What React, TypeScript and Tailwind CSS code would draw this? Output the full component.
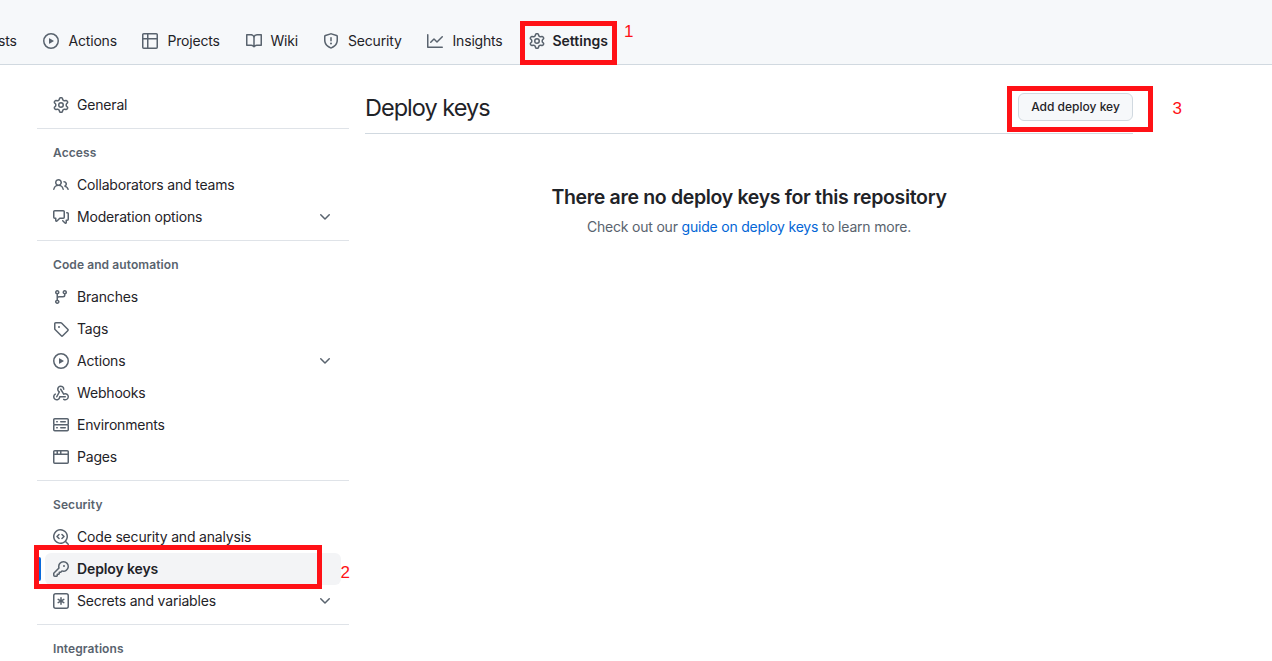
import type { ReactNode } from "react";

const icons = {
  gear: "M8 0a8.2 8.2 0 0 1 .701.031C9.444.095 9.99.645 10.16 1.29l.288 1.107c.018.066.079.158.212.224.231.114.454.243.668.386.123.082.233.09.299.071l1.103-.303c.644-.176 1.392.021 1.82.63.27.385.506.792.704 1.218.315.675.111 1.422-.364 1.891l-.814.806c-.049.048-.098.147-.088.294.016.257.016.515 0 .772-.01.147.038.246.088.294l.814.806c.475.469.679 1.216.364 1.891a7.977 7.977 0 0 1-.704 1.217c-.428.61-1.176.807-1.82.63l-1.102-.302c-.067-.019-.177-.011-.3.071a5.909 5.909 0 0 1-.668.386c-.133.066-.194.158-.211.224l-.29 1.106c-.168.646-.715 1.196-1.458 1.26a8.006 8.006 0 0 1-1.402 0c-.743-.064-1.289-.614-1.458-1.26l-.289-1.106c-.018-.066-.079-.158-.212-.224a5.738 5.738 0 0 1-.668-.386c-.123-.082-.233-.09-.299-.071l-1.103.303c-.644.176-1.392-.021-1.82-.63a8.12 8.12 0 0 1-.704-1.218c-.315-.675-.111-1.422.363-1.891l.815-.806c.05-.048.098-.147.088-.294a6.214 6.214 0 0 1 0-.772c.01-.147-.038-.246-.088-.294l-.815-.806C.635 6.045.431 5.298.746 4.623a7.92 7.92 0 0 1 .704-1.217c.428-.61 1.176-.807 1.82-.63l1.102.302c.067.019.177.011.3-.071.214-.143.437-.272.668-.386.133-.066.194-.158.211-.224l.29-1.106C6.009.645 6.556.095 7.299.03 7.53.01 7.764 0 8 0Zm-.571 1.525c-.036.003-.108.036-.137.146l-.289 1.105c-.147.561-.549.967-.998 1.189-.173.086-.34.183-.5.29-.417.278-.97.423-1.529.27l-1.103-.303c-.109-.03-.175.016-.195.045-.22.312-.412.644-.573.99-.014.031-.021.11.059.19l.815.806c.411.406.562.957.53 1.456a4.709 4.709 0 0 0 0 .582c.032.499-.119 1.05-.53 1.456l-.815.806c-.081.08-.073.159-.059.19.162.346.353.677.573.989.02.03.085.076.195.046l1.102-.303c.56-.153 1.113-.008 1.53.27.161.107.328.204.501.29.447.222.85.629.997 1.189l.289 1.105c.029.109.101.143.137.146a6.6 6.6 0 0 0 1.142 0c.036-.003.108-.036.137-.146l.289-1.105c.147-.561.549-.967.998-1.189.173-.086.34-.183.5-.29.417-.278.97-.423 1.529-.27l1.103.303c.109.029.175-.016.195-.045.22-.313.411-.644.573-.99.014-.031.021-.11-.059-.19l-.815-.806c-.411-.406-.562-.957-.53-1.456a4.709 4.709 0 0 0 0-.582c-.032-.499.119-1.05.53-1.456l.815-.806c.081-.08.073-.159.059-.19a6.464 6.464 0 0 0-.573-.989c-.02-.03-.085-.076-.195-.046l-1.102.303c-.56.153-1.113.008-1.53-.27a4.44 4.44 0 0 0-.501-.29c-.447-.222-.85-.629-.997-1.189l-.289-1.105c-.029-.11-.101-.143-.137-.146a6.6 6.6 0 0 0-1.142 0ZM11 8a3 3 0 1 1-6 0 3 3 0 0 1 6 0ZM9.5 8a1.5 1.5 0 1 0-3.001.001A1.5 1.5 0 0 0 9.5 8Z",
  play: "M8 0a8 8 0 1 1 0 16A8 8 0 0 1 8 0ZM1.5 8a6.5 6.5 0 1 0 13 0 6.5 6.5 0 0 0-13 0Zm4.879-2.773 4.264 2.559a.25.25 0 0 1 0 .428l-4.264 2.559A.25.25 0 0 1 6 10.559V5.442a.25.25 0 0 1 .379-.215Z",
  table: "M0 1.75C0 .784.784 0 1.75 0h12.5C15.216 0 16 .784 16 1.75v12.5A1.75 1.75 0 0 1 14.25 16H1.75A1.75 1.75 0 0 1 0 14.25ZM6.5 6.5v8h7.75a.25.25 0 0 0 .25-.25V6.5Zm8-1.5V1.75a.25.25 0 0 0-.25-.25H6.5V5Zm-13 1.5v7.75c0 .138.112.25.25.25H5v-8ZM5 5V1.5H1.75a.25.25 0 0 0-.25.25V5Z",
  book: "M0 1.75A.75.75 0 0 1 .75 1h4.253c1.227 0 2.317.59 3 1.501A3.743 3.743 0 0 1 11.006 1h4.245a.75.75 0 0 1 .75.75v10.5a.75.75 0 0 1-.75.75h-4.507a2.25 2.25 0 0 0-1.591.659l-.622.621a.75.75 0 0 1-1.06 0l-.622-.621A2.25 2.25 0 0 0 5.258 13H.75a.75.75 0 0 1-.75-.75Zm7.251 10.324.004-5.073-.002-2.253A2.25 2.25 0 0 0 5.003 2.5H1.5v9h3.757a3.75 3.75 0 0 1 1.994.574ZM8.755 4.75l-.004 7.322a3.752 3.752 0 0 1 1.992-.572H14.5v-9h-3.495a2.25 2.25 0 0 0-2.25 2.25Z",
  shield: "M7.467.133a1.748 1.748 0 0 1 1.066 0l5.25 1.68A1.75 1.75 0 0 1 15 3.48V7c0 1.566-.32 3.182-1.303 4.682-.983 1.498-2.585 2.813-5.032 3.855a1.697 1.697 0 0 1-1.33 0c-2.447-1.042-4.049-2.357-5.032-3.855C1.32 10.182 1 8.566 1 7V3.48a1.75 1.75 0 0 1 1.217-1.667Zm.61 1.429a.25.25 0 0 0-.153 0l-5.25 1.68a.25.25 0 0 0-.174.238V7c0 1.358.275 2.666 1.057 3.86.784 1.194 2.121 2.34 4.366 3.297a.196.196 0 0 0 .154 0c2.245-.956 3.582-2.104 4.366-3.298C13.225 9.666 13.5 8.36 13.5 7V3.48a.251.251 0 0 0-.174-.237l-5.25-1.68ZM8.75 4.75v3a.75.75 0 0 1-1.5 0v-3a.75.75 0 0 1 1.5 0ZM9 10.5a1 1 0 1 1-2 0 1 1 0 0 1 2 0Z",
  graph: "M1.5 1.75V13.5h13.75a.75.75 0 0 1 0 1.5H.75a.75.75 0 0 1-.75-.75V1.75a.75.75 0 0 1 1.5 0Zm14.28 2.53-5.25 5.25a.75.75 0 0 1-1.06 0L7 7.06 4.28 9.78a.751.751 0 0 1-1.042-.018.751.751 0 0 1-.018-1.042l3.25-3.25a.75.75 0 0 1 1.06 0L10 7.94l4.72-4.72a.751.751 0 0 1 1.042.018.751.751 0 0 1 .018 1.042Z",
  people: "M2 5.5a3.5 3.5 0 1 1 5.898 2.549 5.508 5.508 0 0 1 3.034 4.084.75.75 0 1 1-1.482.235 4 4 0 0 0-7.9 0 .75.75 0 0 1-1.482-.236A5.507 5.507 0 0 1 3.102 8.05 3.493 3.493 0 0 1 2 5.5ZM11 4a3.001 3.001 0 0 1 2.22 5.018 5.01 5.01 0 0 1 2.56 3.012.749.749 0 0 1-.885.954.752.752 0 0 1-.549-.514 3.507 3.507 0 0 0-2.522-2.372.75.75 0 0 1-.574-.73v-.352a.75.75 0 0 1 .416-.672A1.5 1.5 0 0 0 11 5.5.75.75 0 0 1 11 4Zm-5.5-.5a2 2 0 1 0-.001 3.999A2 2 0 0 0 5.5 3.5Z",
  discussion: "M1.75 1h8.5c.966 0 1.75.784 1.75 1.75v5.5A1.75 1.75 0 0 1 10.25 10H7.061l-2.574 2.573A1.458 1.458 0 0 1 2 11.543V10h-.25A1.75 1.75 0 0 1 0 8.25v-5.5C0 1.784.784 1 1.75 1ZM1.5 2.75v5.5c0 .138.112.25.25.25h1a.75.75 0 0 1 .75.75v2.19l2.72-2.72a.749.749 0 0 1 .53-.22h3.5a.25.25 0 0 0 .25-.25v-5.5a.25.25 0 0 0-.25-.25h-8.5a.25.25 0 0 0-.25.25Zm13 2a.25.25 0 0 0-.25-.25h-.5a.75.75 0 0 1 0-1.5h.5c.966 0 1.75.784 1.75 1.75v5.5A1.75 1.75 0 0 1 14.25 12H14v1.543a1.458 1.458 0 0 1-2.487 1.03L9.22 12.28a.749.749 0 0 1 .326-1.275.749.749 0 0 1 .734.215l2.22 2.22v-2.19a.75.75 0 0 1 .75-.75h1a.25.25 0 0 0 .25-.25Z",
  chevron: "M12.78 5.22a.749.749 0 0 1 0 1.06l-4.25 4.25a.749.749 0 0 1-1.06 0L3.22 6.28a.749.749 0 1 1 1.06-1.06L8 8.939l3.72-3.719a.749.749 0 0 1 1.06 0Z",
  branch: "M9.5 3.25a2.25 2.25 0 1 1 3 2.122V6A2.5 2.5 0 0 1 10 8.5H6a1 1 0 0 0-1 1v1.128a2.251 2.251 0 1 1-1.5 0V5.372a2.25 2.25 0 1 1 1.5 0v1.836A2.493 2.493 0 0 1 6 7h4a1 1 0 0 0 1-1v-.628A2.25 2.25 0 0 1 9.5 3.25Zm-6 0a.75.75 0 1 0 1.5 0 .75.75 0 0 0-1.5 0Zm8.25-.75a.75.75 0 1 0 0 1.5.75.75 0 0 0 0-1.5ZM4.25 12a.75.75 0 1 0 0 1.5.75.75 0 0 0 0-1.5Z",
  tag: "M1 7.775V2.75C1 1.784 1.784 1 2.75 1h5.025c.464 0 .91.184 1.238.513l6.25 6.25a1.75 1.75 0 0 1 0 2.474l-5.026 5.026a1.75 1.75 0 0 1-2.474 0l-6.25-6.25A1.752 1.752 0 0 1 1 7.775Zm1.5 0c0 .066.026.13.073.177l6.25 6.25a.25.25 0 0 0 .354 0l5.025-5.025a.25.25 0 0 0 0-.354l-6.25-6.25a.25.25 0 0 0-.177-.073H2.75a.25.25 0 0 0-.25.25ZM6 5a1 1 0 1 1 0 2 1 1 0 0 1 0-2Z",
  webhook: "M5.5 4.25a2.25 2.25 0 0 1 4.5 0 .75.75 0 0 0 1.5 0 3.75 3.75 0 1 0-6.14 2.889l-2.272 4.258a.75.75 0 0 0 1.324.706L7 7.25a.75.75 0 0 0-.309-1.015A2.25 2.25 0 0 1 5.5 4.25ZM7.364 3.607a.75.75 0 0 1 1.03.257l2.608 4.349a3.75 3.75 0 1 1-.628 6.785.75.75 0 0 1 .752-1.299 2.25 2.25 0 1 0-.033-3.88.75.75 0 0 1-1.03-.256L7.107 4.636a.75.75 0 0 1 .257-1.03ZM2.9 8.776A.75.75 0 0 1 2.625 9.8 2.25 2.25 0 1 0 6 11.75a.75.75 0 0 1 .75-.751h5.5a.75.75 0 0 1 0 1.5H7.425a3.751 3.751 0 1 1-5.55-3.998.75.75 0 0 1 1.024.274Z",
  server: "M1.75 1h12.5c.966 0 1.75.784 1.75 1.75v4c0 .372-.116.717-.314 1 .198.283.314.628.314 1v4a1.75 1.75 0 0 1-1.75 1.75H1.75A1.75 1.75 0 0 1 0 12.75v-4c0-.358.109-.707.314-1a1.739 1.739 0 0 1-.314-1v-4C0 1.784.784 1 1.75 1ZM1.5 2.75v4c0 .138.112.25.25.25h12.5a.25.25 0 0 0 .25-.25v-4a.25.25 0 0 0-.25-.25H1.75a.25.25 0 0 0-.25.25Zm.25 5.75a.25.25 0 0 0-.25.25v4c0 .138.112.25.25.25h12.5a.25.25 0 0 0 .25-.25v-4a.25.25 0 0 0-.25-.25ZM7 4.75A.75.75 0 0 1 7.75 4h4.5a.75.75 0 0 1 0 1.5h-4.5A.75.75 0 0 1 7 4.75ZM7.75 10h4.5a.75.75 0 0 1 0 1.5h-4.5a.75.75 0 0 1 0-1.5ZM3 4.75A.75.75 0 0 1 3.75 4h.5a.75.75 0 0 1 0 1.5h-.5A.75.75 0 0 1 3 4.75ZM3.75 10h.5a.75.75 0 0 1 0 1.5h-.5a.75.75 0 0 1 0-1.5Z",
  browser: "M0 2.75C0 1.784.784 1 1.75 1h12.5c.966 0 1.75.784 1.75 1.75v10.5A1.75 1.75 0 0 1 14.25 15H1.75A1.75 1.75 0 0 1 0 13.25ZM14.5 6h-13v7.25c0 .138.112.25.25.25h12.5a.25.25 0 0 0 .25-.25Zm-6-3.5v2h6V2.75a.25.25 0 0 0-.25-.25ZM5 2.5v2h2v-2Zm-3.25 0a.25.25 0 0 0-.25.25V4.5h2v-2Z",
  codescan: "M8.47 4.97a.75.75 0 0 0 0 1.06L9.94 7.5 8.47 8.97a.75.75 0 1 0 1.06 1.06l2-2a.75.75 0 0 0 0-1.06l-2-2a.75.75 0 0 0-1.06 0ZM6.53 6.03a.75.75 0 0 0-1.06-1.06l-2 2a.75.75 0 0 0 0 1.06l2 2a.75.75 0 1 0 1.06-1.06L5.06 7.5l1.47-1.47ZM12.246 13.307a7.501 7.501 0 1 1 1.06-1.06l2.474 2.473a.749.749 0 1 1-1.06 1.06l-2.474-2.473ZM1.5 7.5a6.002 6.002 0 0 0 3.608 5.504 6.002 6.002 0 0 0 6.486-1.117.748.748 0 0 1 .292-.293A6 6 0 1 0 1.5 7.5Z",
  key: "M10.5 0a5.499 5.499 0 1 1-1.288 10.848l-.932.932a.749.749 0 0 1-.53.22H7v.75a.749.749 0 0 1-.22.53l-.5.5a.749.749 0 0 1-.53.22H5v.75a.749.749 0 0 1-.22.53l-.5.5a.749.749 0 0 1-.53.22h-2A1.75 1.75 0 0 1 0 14.25v-2c0-.199.079-.389.22-.53l4.932-4.932A5.5 5.5 0 0 1 10.5 0Zm-4 5.5c-.001.431.069.86.205 1.269a.75.75 0 0 1-.181.768L1.5 12.56v1.69c0 .138.112.25.25.25h1.69l.06-.06v-1.19a.75.75 0 0 1 .75-.75h1.19l.06-.06v-1.19a.75.75 0 0 1 .75-.75h1.19l1.023-1.025a.75.75 0 0 1 .768-.18A4 4 0 1 0 6.5 5.5ZM11 6a1 1 0 1 1 0-2 1 1 0 0 1 0 2Z",
  asterisk: "M0 2.75A2.75 2.75 0 0 1 2.75 0h10.5A2.75 2.75 0 0 1 16 2.75v10.5A2.75 2.75 0 0 1 13.25 16H2.75A2.75 2.75 0 0 1 0 13.25ZM2.75 1.5c-.69 0-1.25.56-1.25 1.25v10.5c0 .69.56 1.25 1.25 1.25h10.5c.69 0 1.25-.56 1.25-1.25V2.75c0-.69-.56-1.25-1.25-1.25ZM8 4a.75.75 0 0 1 .75.75V6.7l1.69-.975a.75.75 0 0 1 .75 1.3L9.5 8l1.69.976a.75.75 0 0 1-.75 1.298L8.75 9.3v1.951a.75.75 0 0 1-1.5 0V9.299l-1.69.976a.75.75 0 0 1-.75-1.3L6.5 8l-1.69-.975a.75.75 0 0 1 .75-1.3l1.69.976V4.75A.75.75 0 0 1 8 4Z",
};

type IconName = keyof typeof icons;

function Icon({ name }: { name: IconName }) {
  return (
    <svg viewBox="0 0 16 16" className="h-4 w-4 shrink-0 fill-[#59636e]" aria-hidden="true">
      <path d={icons[name]} />
    </svg>
  );
}

function Tab({ icon, className, children }: { icon: IconName; className: string; children: ReactNode }) {
  return (
    <a className={`flex shrink-0 items-center whitespace-nowrap ${className}`}>
      <Icon name={icon} />
      <span>{children}</span>
    </a>
  );
}

function Item({ icon, label, expandable }: { icon: IconName; label: string; expandable?: boolean }) {
  return (
    <li className="flex h-8 items-center gap-2 pr-4 pl-4">
      <Icon name={icon} />
      <span className="grow">{label}</span>
      {expandable && <Icon name="chevron" />}
    </li>
  );
}

function Section({ title, children }: { title: string; children?: ReactNode }) {
  return (
    <li className="mt-[7px] border-t border-[#dfe3e8] pt-2">
      <h3 className="flex h-8 items-center pl-4 text-xs font-semibold tracking-[0.09px] text-[#59636e]">{title}</h3>
      <ul>{children}</ul>
    </li>
  );
}

export default function App() {
  return (
    <div className="relative h-[661px] w-[1272px] overflow-hidden bg-white font-['Inter','Liberation_Sans',sans-serif] text-sm tracking-[-0.18px] text-[#1f2328]">
      <header className="flex h-[65px] items-center border-b border-[#d1d9e0] bg-[#f6f8fa] pt-[18px]">
        <span className="w-[43px] shrink-0">
          <span className="-ml-[2px]">sts</span>
        </span>
        <Tab icon="play" className="w-[99px] gap-[9.5px]">Actions</Tab>
        <Tab icon="table" className="w-[104px] gap-[9.5px]">Projects</Tab>
        <Tab icon="book" className="w-[77px] gap-[8.5px]">Wiki</Tab>
        <Tab icon="shield" className="w-[104px] gap-[9px]">Security</Tab>
        <Tab icon="graph" className="w-[102px] gap-[9.5px]">Insights</Tab>
        <Tab icon="gear" className="gap-[7.5px] font-semibold tracking-[-0.02px]">Settings</Tab>
      </header>

      <div className="flex">
        <nav className="w-[349px] shrink-0 pt-6 pl-[37px]">
          <ul>
            <Item icon="gear" label="General" />
            <Section title="Access">
              <Item icon="people" label="Collaborators and teams" />
              <Item icon="discussion" label="Moderation options" expandable />
            </Section>
            <Section title="Code and automation">
              <Item icon="branch" label="Branches" />
              <Item icon="tag" label="Tags" />
              <Item icon="play" label="Actions" expandable />
              <Item icon="webhook" label="Webhooks" />
              <Item icon="server" label="Environments" />
              <Item icon="browser" label="Pages" />
            </Section>
            <Section title="Security">
              <Item icon="codescan" label="Code security and analysis" />
              <li className="flex h-8 items-center gap-1">
                <span className="h-6 w-1 rounded-md bg-[#0969da]" />
                <span className="flex h-8 w-[296px] items-center gap-2 rounded-md bg-[#f3f4f6] pl-2 font-semibold tracking-[-0.12px]">
                  <Icon name="key" />
                  Deploy keys
                </span>
              </li>
              <Item icon="asterisk" label="Secrets and variables" expandable />
            </Section>
            <Section title="Integrations" />
          </ul>
        </nav>

        <main className="ml-4 w-[768px] pt-6">
          <div className="flex h-[45px] items-start justify-between border-b border-[#d1d9e0]">
            <h1 className="pt-px text-[23.5px] leading-9 tracking-[-0.98px]">Deploy keys</h1>
            <button className="mt-1 h-7 w-[115px] rounded-md border border-[#d1d9e0] bg-[#f6f8fa] text-xs font-medium tracking-normal whitespace-nowrap">
              Add deploy key
            </button>
          </div>
          <section className="pt-12 text-center">
            <h2 className="text-[19.5px] leading-[30px] font-semibold tracking-[-0.33px]">There are no deploy keys for this repository</h2>
            <p className="mt-1 leading-[21px] tracking-[-0.2px] text-[#59636e]">
              Check out our <a className="text-[#0366d6]">guide on deploy keys</a> to learn more.
            </p>
          </section>
        </main>
      </div>

      <div className="absolute top-[21px] left-[520px] h-[44px] w-[97px] border-5 border-[#ff1116]" />
      <div className="absolute top-[545px] left-[34px] h-[44px] w-[288px] border-5 border-[#ff1116]" />
      <div className="absolute top-[86px] left-[1007px] h-[46px] w-[146px] border-5 border-[#ff1116]" />
      <span className="absolute top-[22px] left-[624px] font-['Liberation_Sans',sans-serif] text-[17px] leading-5 tracking-normal text-[#ff1116]">1</span>
      <span className="absolute top-[563px] left-[340.5px] font-['Liberation_Sans',sans-serif] text-[17px] leading-5 tracking-normal text-[#ff1116]">2</span>
      <span className="absolute top-[99px] left-[1172.5px] font-['Liberation_Sans',sans-serif] text-[17px] leading-5 tracking-normal text-[#ff1116]">3</span>
    </div>
  );
}
